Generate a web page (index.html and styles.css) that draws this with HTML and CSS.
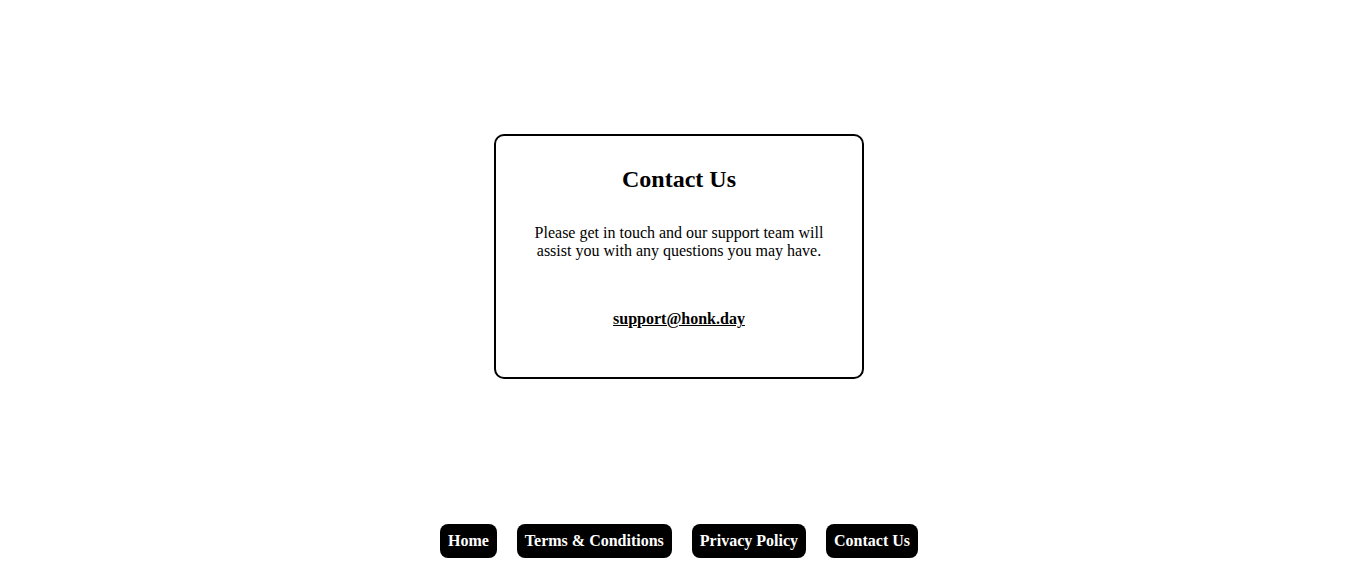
FILE: index.html
```html
<!DOCTYPE html>
<html lang="en">
<head>
<meta charset="utf-8">
<title>Contact Us</title>
<link rel="stylesheet" href="styles.css">
</head>
<body>
<main class="main">
  <section class="card">
    <h2 class="card-title">Contact Us</h2>
    <p class="card-text">Please get in touch and our support team will assist you with any questions you may have.</p>
    <a class="card-email" href="mailto:support@honk.day">support@honk.day</a>
  </section>
</main>
<footer class="footer">
  <a class="nav-btn" href="#">Home</a>
  <a class="nav-btn" href="#">Terms &amp; Conditions</a>
  <a class="nav-btn" href="#">Privacy Policy</a>
  <a class="nav-btn" href="#">Contact Us</a>
</footer>
</body>
</html>
```

FILE: styles.css
```css
html, body {
  margin: 0;
  padding: 0;
  background: #fff;
}
body {
  font-family: "Liberation Serif", "Times New Roman", serif;
  font-size: 16px;
  color: #000;
  height: 100vh;
  display: flex;
  flex-direction: column;
}
.main {
  flex: 1;
  display: flex;
  align-items: center;
  justify-content: center;
}
.card {
  box-sizing: border-box;
  width: 370px;
  border: 2px solid #000;
  border-radius: 10px;
  padding: 0 30px 49px;
  text-align: center;
  display: flex;
  flex-direction: column;
  align-items: center;
}
.card-title {
  margin: 30px 0 0;
  font-size: 24px;
  line-height: 27px;
  font-weight: bold;
}
.card-text {
  margin: 31px 0 0;
  line-height: 18px;
}
.card-email {
  margin-top: 50px;
  line-height: 18px;
  font-weight: bold;
  color: #000;
  text-decoration: underline;
}
.footer {
  display: flex;
  justify-content: center;
  gap: 20px;
  padding: 11px 0 27px;
}
.nav-btn {
  background: #000;
  color: #fff;
  font-weight: bold;
  text-decoration: none;
  padding: 8px 8px;
  line-height: 18px;
  border-radius: 8px;
}
```
